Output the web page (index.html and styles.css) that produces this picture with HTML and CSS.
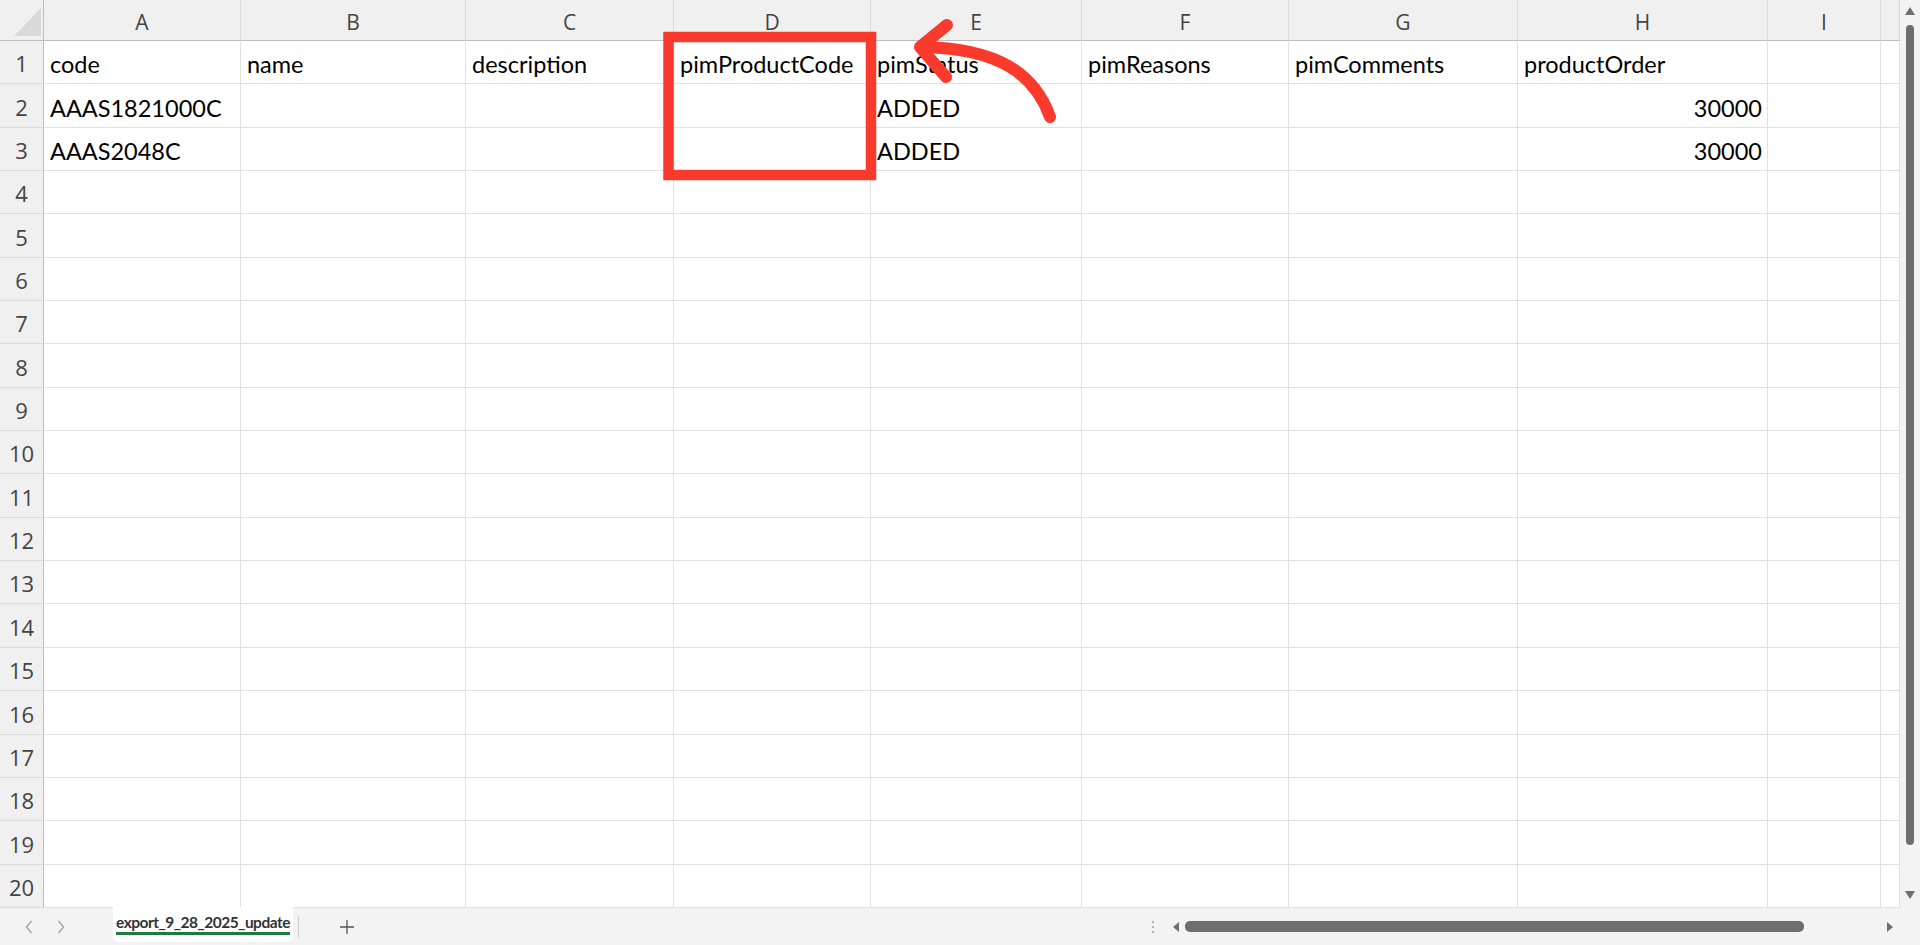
FILE: index.html
```html
<!DOCTYPE html>
<html lang="en">
<head>
  <meta charset="UTF-8">
  <meta name="viewport" content="width=device-width, initial-scale=1.0">
  <title>export_9_28_2025_update</title>
  <link rel="stylesheet" href="styles.css">
</head>
<body>
  <div class="window">
    <div class="workspace">
      <div class="sheet" id="sheet">
        <div class="corner">
          <svg width="44" height="41" viewBox="0 0 44 41"><polygon points="41,8 14,36 41,36" fill="#d9d9d9"/></svg>
        </div>
        <div class="col-head">A</div>
        <div class="col-head">B</div>
        <div class="col-head">C</div>
        <div class="col-head">D</div>
        <div class="col-head">E</div>
        <div class="col-head">F</div>
        <div class="col-head">G</div>
        <div class="col-head">H</div>
        <div class="col-head">I</div>
        <div class="col-head"></div>

        <div class="row-head">1</div>
        <div class="cell">code</div>
        <div class="cell">name</div>
        <div class="cell">description</div>
        <div class="cell">pimProductCode</div>
        <div class="cell">pimStatus</div>
        <div class="cell">pimReasons</div>
        <div class="cell">pimComments</div>
        <div class="cell">productOrder</div>
        <div class="cell"></div>
        <div class="cell"></div>

        <div class="row-head">2</div>
        <div class="cell">AAAS1821000C</div>
        <div class="cell"></div>
        <div class="cell"></div>
        <div class="cell"></div>
        <div class="cell">ADDED</div>
        <div class="cell"></div>
        <div class="cell"></div>
        <div class="cell num">30000</div>
        <div class="cell"></div>
        <div class="cell"></div>

        <div class="row-head">3</div>
        <div class="cell">AAAS2048C</div>
        <div class="cell"></div>
        <div class="cell"></div>
        <div class="cell"></div>
        <div class="cell">ADDED</div>
        <div class="cell"></div>
        <div class="cell"></div>
        <div class="cell num">30000</div>
        <div class="cell"></div>
        <div class="cell"></div>
      </div>

      <div class="vscroll">
        <svg class="vs-arrow" width="10" height="8" viewBox="0 0 10 8"><polygon points="5,0 10,8 0,8" fill="#6e6e6e"/></svg>
        <div class="vs-thumb"></div>
        <svg class="vs-arrow vs-down" width="10" height="8" viewBox="0 0 10 8"><polygon points="0,0 10,0 5,8" fill="#6e6e6e"/></svg>
      </div>
    </div>

    <div class="tabbar">
      <div class="tab-nav">
        <span class="nav-btn">
          <svg width="8" height="14" viewBox="0 0 8 14"><path d="M6.5 1 L1.5 7 L6.5 13" fill="none" stroke="#a0a0a0" stroke-width="1.3"/></svg>
        </span>
        <span class="nav-btn">
          <svg width="8" height="14" viewBox="0 0 8 14"><path d="M1.5 1 L6.5 7 L1.5 13" fill="none" stroke="#a0a0a0" stroke-width="1.3"/></svg>
        </span>
      </div>
      <div class="tab active"><span class="tab-label">export_9_28_2025_update</span></div>
      <div class="tab-sep"></div>
      <span class="add-sheet">
        <svg width="16" height="16" viewBox="0 0 16 16"><path d="M8 1 V15 M1 8 H15" fill="none" stroke="#555" stroke-width="1.3"/></svg>
      </span>

      <div class="hscroll">
        <div class="grip"><i></i><i></i><i></i></div>
        <div class="hs-track">
          <svg width="6" height="10" viewBox="0 0 6 10"><polygon points="6,0 6,10 0,5" fill="#6e6e6e"/></svg>
          <div class="hs-thumb"></div>
          <svg width="6" height="10" viewBox="0 0 6 10"><polygon points="0,0 6,5 0,10" fill="#6e6e6e"/></svg>
        </div>
      </div>
    </div>

    <!-- hand-drawn markup over the sheet -->
    <svg class="markup" width="1920" height="945" viewBox="0 0 1920 945">
      <rect x="668.5" y="37" width="202.5" height="138" fill="none" stroke="#fb3a2e" stroke-width="10.5"/>
      <path d="M1050 117 C1035 75 1000 48 921 47" fill="none" stroke="#fb3a2e" stroke-width="12" stroke-linecap="round"/>
      <path d="M947 25 L920 47 L946 77" fill="none" stroke="#fb3a2e" stroke-width="12" stroke-linecap="round" stroke-linejoin="round"/>
    </svg>
  </div>

  <script>
    // Fill the empty rows 4..20
    const sheet = document.getElementById('sheet');
    for (let r = 4; r <= 20; r++) {
      const head = document.createElement('div');
      head.className = 'row-head';
      head.textContent = r;
      sheet.appendChild(head);
      for (let c = 0; c < 10; c++) {
        const cell = document.createElement('div');
        cell.className = 'cell';
        sheet.appendChild(cell);
      }
    }
  </script>
</body>
</html>
```

FILE: styles.css
```css
* {
  box-sizing: border-box;
}

body {
  margin: 0;
  width: 1920px;
  height: 945px;
  overflow: hidden;
  background-color: #fff;
  font-family: Lato, "Liberation Sans", sans-serif;
}

.window {
  position: relative;
  display: flex;
  flex-direction: column;
  height: 945px;
}

.workspace {
  display: flex;
  height: 908px;
}

.sheet {
  display: grid;
  grid-template-columns: 44px 197px 225px 208px 197px 211px 207px 229px 250px 113px 19px;
  grid-template-rows: 41px repeat(20, 43.35px);
  width: 1900px;
}

.corner {
  background-color: #f0f0f0;
  border-right: 1px solid #bdbdbd;
  border-bottom: 1px solid #bdbdbd;
}

.corner svg {
  display: block;
}

.col-head {
  display: flex;
  align-items: center;
  justify-content: center;
  padding-top: 4px;
  background-color: #f0f0f0;
  border-right: 1px solid #dcdcdc;
  border-bottom: 1px solid #bdbdbd;
  font-family: "Open Sans", "Noto Sans", sans-serif;
  font-size: 21px;
  color: #444;
}

.row-head {
  display: flex;
  align-items: flex-end;
  justify-content: center;
  padding-bottom: 5px;
  background-color: #f0f0f0;
  border-right: 1px solid #bdbdbd;
  border-bottom: 1px solid #dcdcdc;
  font-family: "Open Sans", "Noto Sans", sans-serif;
  font-size: 22px;
  color: #444;
}

.cell {
  display: flex;
  align-items: flex-end;
  padding: 0 5px 5px 6px;
  border-right: 1px solid #e1e1e1;
  border-bottom: 1px solid #e1e1e1;
  font-size: 23.5px;
  color: #000;
  white-space: nowrap;
}

.cell.num {
  justify-content: flex-end;
}

/* vertical scrollbar */
.vscroll {
  width: 20px;
  display: flex;
  flex-direction: column;
  align-items: center;
  background-color: #f3f3f3;
  padding-top: 7px;
}

.vs-arrow {
  display: block;
}

.vs-thumb {
  width: 8px;
  height: 820px;
  margin-top: 10px;
  background-color: #6e6e6e;
  border-radius: 4px;
}

.vs-down {
  margin-top: 46px;
}

/* sheet tabs + horizontal scrollbar */
.tabbar {
  display: flex;
  align-items: center;
  height: 37px;
  background-color: #f3f3f3;
  color: #555;
}

.tab-nav {
  display: flex;
  width: 113px;
  padding-left: 13px;
}

.nav-btn {
  display: flex;
  justify-content: center;
  width: 32px;
}

.tab {
  align-self: flex-start;
  width: 180px;
  height: 35px;
  margin-top: -1px;
  background-color: #fff;
  border-radius: 0 0 6px 6px;
  text-align: center;
}

.tab-label {
  display: inline-block;
  margin-top: 6px;
  padding-bottom: 1px;
  border-bottom: 3px solid #1d7a40;
  font-size: 15.5px;
  font-weight: 700;
  letter-spacing: -0.5px;
  color: #333;
}

.tab-sep {
  width: 1px;
  height: 22px;
  margin-left: 5px;
  background-color: #cfcfcf;
}

.add-sheet {
  display: flex;
  justify-content: center;
  width: 32px;
  margin-left: 32px;
}

.hscroll {
  display: flex;
  align-items: center;
  margin-left: auto;
  width: 775px;
  height: 100%;
}

.grip {
  display: flex;
  flex-direction: column;
  gap: 3px;
  width: 16px;
  align-items: center;
}

.grip i {
  display: block;
  width: 2px;
  height: 2px;
  background-color: #b0b0b0;
}

.hs-track {
  display: flex;
  align-items: center;
  margin-left: 12px;
  height: 100%;
}

.hs-track svg {
  display: block;
}

.hs-thumb {
  width: 619px;
  height: 11px;
  margin: 0 83px 0 6px;
  background-color: #6e6e6e;
  border-radius: 5px;
}

.markup {
  position: absolute;
  top: 0;
  left: 0;
  pointer-events: none;
}
```
